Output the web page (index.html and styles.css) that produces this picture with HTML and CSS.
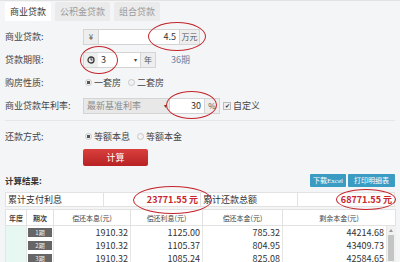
FILE: index.html
```html
<!DOCTYPE html>
<html lang="zh-CN">
<head>
    <meta charset="UTF-8">
    <title>房贷计算器</title>
    <link rel="stylesheet" href="styles.css">
</head>
<body>
<div class="page">
    <div class="tabs">
        <span class="tab active">商业贷款</span>
        <span class="tab">公积金贷款</span>
        <span class="tab">组合贷款</span>
    </div>

    <div class="form">
        <div class="row">
            <span class="lbl">商业贷款:</span>
            <div class="group g-amount">
                <span class="addon a-yen">¥</span>
                <span class="field num">4.5</span>
                <span class="addon a-unit">万元</span>
            </div>
        </div>
        <div class="row">
            <span class="lbl">贷款期限:</span>
            <div class="group">
                <span class="addon a-icon">
                    <svg width="8" height="8" viewBox="0 0 8 8"><circle cx="4" cy="4" r="3" fill="none" stroke="#333" stroke-width="1.3"/><path d="M4 2.2V4h1.5" fill="none" stroke="#333" stroke-width="1"/></svg>
                </span>
                <span class="field sel-years">3<span class="caret">▾</span></span>
                <span class="addon a-icon">年</span>
            </div>
            <span class="periods">36期</span>
        </div>
        <div class="row">
            <span class="lbl">购房性质:</span>
            <span class="radio on"></span><span class="opt">一套房</span>
            <span class="radio"></span><span class="opt">二套房</span>
        </div>
        <div class="row">
            <span class="lbl">商业贷款年利率:</span>
            <div class="group">
                <span class="select-rate">最新基准利率<span class="caret">▾</span></span>
                <span class="field num rate">30</span>
                <span class="addon a-icon">%</span>
            </div>
            <span class="check">✔</span><span class="opt">自定义</span>
        </div>
        <div class="divider"></div>
        <div class="row">
            <span class="lbl">还款方式:</span>
            <span class="radio on"></span><span class="opt">等额本息</span>
            <span class="radio"></span><span class="opt">等额本金</span>
        </div>
        <div class="btn-row">
            <button class="calc">计算</button>
        </div>
    </div>

    <div class="result">
        <div class="result-head">
            <span class="result-title">计算结果:</span>
            <div class="tools">
                <button class="tool">下载Excel</button>
                <button class="tool">打印明细表</button>
            </div>
        </div>
        <div class="summary">
            <span class="cell">累计支付利息</span>
            <span class="cell value">23771.55 元</span>
            <span class="cell">累计还款总额</span>
            <span class="cell value">68771.55 元</span>
        </div>
        <table class="detail">
            <colgroup>
                <col style="width:21px"><col style="width:27px"><col style="width:77px">
                <col style="width:72px"><col style="width:80px"><col style="width:104px"><col style="width:9px">
            </colgroup>
            <thead>
                <tr>
                    <th>年度</th><th>期次</th><th>偿还本息(元)</th><th>偿还利息(元)</th>
                    <th>偿还本金(元)</th><th colspan="2">剩余本金(元)</th>
                </tr>
            </thead>
            <tbody>
                <tr>
                    <td class="year" rowspan="3"></td>
                    <td class="period"><span class="badge">1期</span></td>
                    <td>1910.32</td><td>1125.00</td><td>785.32</td><td>44214.68</td>
                    <td class="scroll" rowspan="3"><span class="arrow"></span><span class="thumb"></span></td>
                </tr>
                <tr>
                    <td class="period"><span class="badge">2期</span></td>
                    <td>1910.32</td><td>1105.37</td><td>804.95</td><td>43409.73</td>
                </tr>
                <tr>
                    <td class="period"><span class="badge">3期</span></td>
                    <td>1910.32</td><td>1085.24</td><td>825.08</td><td>42584.65</td>
                </tr>
            </tbody>
        </table>
    </div>

    <!-- red hand-drawn marks over the screenshot -->
    <i class="mark m-amount"></i>
    <i class="mark m-years"></i>
    <i class="mark m-rate"></i>
    <i class="mark m-interest"></i>
    <i class="mark m-total"></i>
</div>
</body>
</html>
```

FILE: styles.css
```css
body {
    margin: 0;
    background: #f4f5f7;
    font-family: "Noto Sans CJK SC", "Noto Sans", sans-serif;
    font-size: 9px;
    color: #444;
}
.page {
    position: relative;
    width: 400px;
    height: 262px;
    overflow: hidden;
    border-top: 1px solid #e2e2e2;
    box-sizing: border-box;
}
.tabs {
    display: flex;
    gap: 4px;
    padding: 1px 5px 0;
    height: 19px;
}
.tab {
    display: flex;
    align-items: center;
    padding: 0 5px;
    background: #ebebeb;
    color: #9a9a9a;
    border-radius: 2px 2px 0 0;
}
.tab.active {
    background: #fff;
    color: #333;
}
.form {
    padding: 4px 5px 0;
}
.row {
    display: flex;
    align-items: center;
    height: 23px;
}
.lbl {
    width: 78px;
}
.group {
    display: flex;
    height: 16px;
    border: 1px solid #d4d4d4;
    box-sizing: border-box;
    background: #fff;
}
.g-amount {
    width: 117px;
}
.addon {
    display: flex;
    align-items: center;
    justify-content: center;
    background: #eee;
    color: #555;
    font-size: 8px;
}
.a-yen {
    width: 14px;
    border-right: 1px solid #d4d4d4;
}
.a-unit {
    width: 19px;
    border-left: 1px solid #d4d4d4;
}
.a-icon {
    width: 14px;
}
.group .a-icon:last-child {
    border-left: 1px solid #d4d4d4;
}
.field {
    flex: 1;
    display: flex;
    align-items: center;
    padding: 0 3px;
    color: #333;
}
.num {
    justify-content: flex-end;
}
.sel-years {
    width: 36px;
    flex: none;
}
.caret {
    margin-left: auto;
    font-size: 6px;
    color: #444;
}
.periods {
    margin-left: 15px;
    color: #6d81a3;
}
.radio {
    width: 5px;
    height: 5px;
    border: 1px solid #c8c8c8;
    border-radius: 50%;
    background: #f3f3f3;
    margin: 0 2px;
}
.radio.on {
    background: radial-gradient(circle, #555 0 1.4px, #f3f3f3 1.8px);
}
.opt {
    margin-right: 5px;
}
.select-rate {
    display: flex;
    align-items: center;
    width: 80px;
    padding: 0 2px 0 3px;
    background: #e8e8e8;
    color: #8c8c8c;
    border-right: 1px solid #d4d4d4;
}
.rate {
    width: 28px;
    flex: none;
}
.check {
    width: 6px;
    height: 6px;
    margin: 0 2px 0 3px;
    background: #eee;
    border: 1px solid #bbb;
    font-size: 6px;
    line-height: 6px;
    text-align: center;
    color: #333;
}
.divider {
    height: 1px;
    margin: 3px 0 4px;
    background: #e6e6e6;
}
.btn-row {
    padding: 1px 0 0 78px;
}
.calc {
    width: 65px;
    height: 17px;
    border: none;
    border-radius: 2px;
    background: linear-gradient(#d9403d, #b82224);
    color: #fff;
    font-family: inherit;
    font-size: 9px;
    padding: 0;
}
.result {
    padding: 6px 5px 0;
}
.result-head {
    display: flex;
    justify-content: space-between;
    align-items: center;
    height: 16px;
}
.result-title {
    color: #333;
    font-weight: bold;
    font-size: 8.5px;
}
.tools {
    display: flex;
    gap: 2px;
}
.tool {
    height: 13px;
    padding: 0 3px;
    border: none;
    border-radius: 1px;
    background: #3b9cc3;
    color: #fff;
    font-family: "Liberation Serif", "Noto Sans CJK SC", serif;
    font-size: 7px;
    white-space: nowrap;
}
.tool:last-child {
    width: 47px;
}
.summary {
    display: grid;
    grid-template-columns: repeat(4, 1fr);
    height: 15px;
    margin-top: 4px;
    background: #fff;
    border: 1px solid #e2e2e2;
    box-sizing: border-box;
}
.summary .cell {
    display: flex;
    align-items: center;
    padding: 0 2px;
    border-left: 1px solid #e2e2e2;
    color: #333;
}
.summary .cell:first-child {
    border-left: none;
}
.summary .value {
    justify-content: flex-end;
    color: #c8242b;
    font-weight: bold;
}
.detail {
    width: 390px;
    margin-top: 2px;
    border-collapse: collapse;
    table-layout: fixed;
    background: #fff;
}
.detail th {
    height: 15px;
    padding: 0;
    font-size: 7px;
    font-weight: normal;
    color: #444;
    border: 1px solid #e2e2e2;
}
.detail th:first-child,
.detail th:nth-child(2) {
    font-weight: bold;
}
.detail td {
    height: 13px;
    padding: 0 2px 0 0;
    text-align: right;
    line-height: 12px;
    color: #333;
    border-left: 1px solid #e6e6e6;
}
.detail td.year {
    background: #e7f8f2;
}
.detail td.period {
    padding: 0 1px;
    text-align: center;
}
.badge {
    display: block;
    height: 9px;
    line-height: 9px;
    background: #666;
    color: #eee;
    font-size: 6px;
}
.detail td.scroll {
    padding: 0;
    background: #f1f1f1;
    vertical-align: top;
    line-height: 0;
}
.arrow {
    display: block;
    width: 0;
    height: 0;
    margin: 3px auto 0;
    border-left: 2.5px solid transparent;
    border-right: 2.5px solid transparent;
    border-bottom: 3px solid #999;
}
.thumb {
    display: block;
    width: 6px;
    height: 26px;
    margin: 3px auto 0;
    background: #c4c4c4;
}
.mark {
    position: absolute;
    border: 1.4px solid #c3242a;
    border-radius: 50%;
    box-sizing: border-box;
}
.m-amount {
    left: 148px;
    top: 21px;
    width: 58px;
    height: 29px;
}
.m-years {
    left: 80px;
    top: 45px;
    width: 38px;
    height: 28px;
}
.m-rate {
    left: 166px;
    top: 90px;
    width: 51px;
    height: 28px;
}
.m-interest {
    left: 133px;
    top: 185px;
    width: 79px;
    height: 28px;
}
.m-total {
    left: 336px;
    top: 188px;
    width: 60px;
    height: 21px;
}
```
